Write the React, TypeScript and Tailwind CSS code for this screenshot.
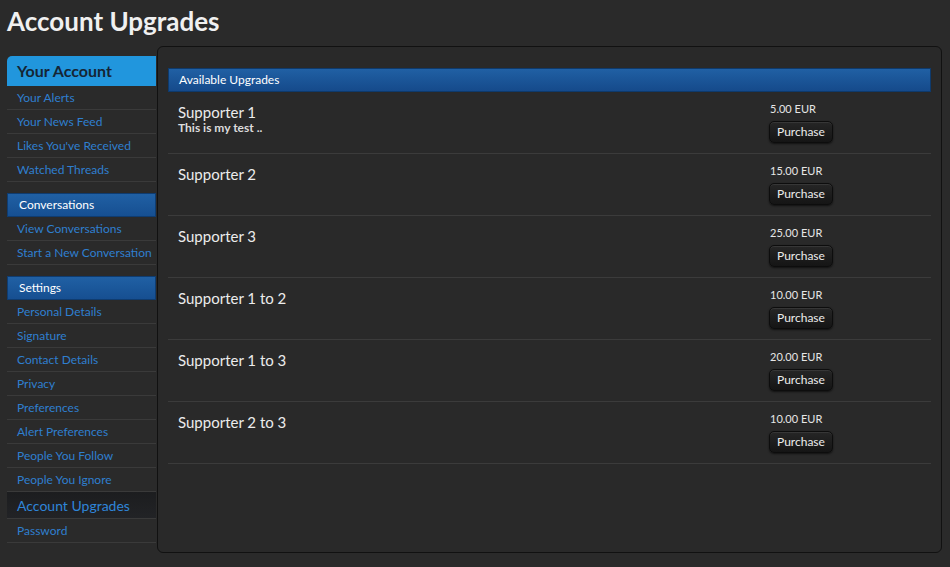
import React from 'react'

const accountLinks = ['Your Alerts', 'Your News Feed', "Likes You've Received", 'Watched Threads']
const convoLinks = ['View Conversations', 'Start a New Conversation']
const settingsLinks = [
  'Personal Details',
  'Signature',
  'Contact Details',
  'Privacy',
  'Preferences',
  'Alert Preferences',
  'People You Follow',
  'People You Ignore',
]

const upgrades = [
  { title: 'Supporter 1', desc: 'This is my test ..', price: '5.00 EUR' },
  { title: 'Supporter 2', price: '15.00 EUR' },
  { title: 'Supporter 3', price: '25.00 EUR' },
  { title: 'Supporter 1 to 2', price: '10.00 EUR' },
  { title: 'Supporter 1 to 3', price: '20.00 EUR' },
  { title: 'Supporter 2 to 3', price: '10.00 EUR' },
]

function NavLink({ label }: { label: string }) {
  return (
    <div className="h-6 pl-[10px] flex items-center border-b border-[#3a3a3a] text-[12px] text-[#2f7fcf] whitespace-nowrap">
      {label}
    </div>
  )
}

function SectionHead({ label }: { label: string }) {
  return (
    <div className="h-6 pl-[11px] flex items-center bg-gradient-to-b from-[#2060a4] to-[#164f91] border border-[#0f3c70] text-[12px] text-white">
      {label}
    </div>
  )
}

function UpgradeRow({ title, desc, price }: { title: string; desc?: string; price: string }) {
  return (
    <div className="h-[62px] flex border-b border-[#3b3b3b]">
      <div className="flex-1 pl-[10px] pt-[12px]">
        <div className="text-[15px] leading-[17px] text-[#ececec]">{title}</div>
        {desc && <div className="text-[12px] leading-[14px] font-bold text-[#dcdcdc]">{desc}</div>}
      </div>
      <div className="w-[162px] pt-[10px]">
        <div className="text-[11px] leading-[13px] text-[#e6e6e6] pl-[1px]">{price}</div>
        <button className="mt-[6px] h-[22px] px-[7px] rounded-[5px] bg-gradient-to-b from-[#262626] to-[#151515] border border-[#0d0d0d] shadow-[inset_0_1px_0_rgba(255,255,255,0.08),0_1px_2px_rgba(0,0,0,0.6)] text-[12px] text-[#ececec]">
          Purchase
        </button>
      </div>
    </div>
  )
}

export default function App() {
  return (
    <div className="w-[950px] h-[567px] bg-[#2a2a2a] font-['Lato',sans-serif] overflow-hidden">
      <h1 className="pl-[7px] pt-[5px] h-[46px] text-[26px] leading-[32px] font-bold text-[#f0f0f0]">
        Account Upgrades
      </h1>
      <div className="flex pl-[7px]">
        <div className="w-[149px] pt-[10px]">
          <div className="h-[30px] pl-[10px] flex items-center rounded-tl-[5px] bg-[#2196dd] text-[16px] font-bold text-[#152535]">
            Your Account
          </div>
          {accountLinks.map((l) => (
            <NavLink key={l} label={l} />
          ))}
          <div className="h-[11px]" />
          <SectionHead label="Conversations" />
          {convoLinks.map((l) => (
            <NavLink key={l} label={l} />
          ))}
          <div className="h-[11px]" />
          <SectionHead label="Settings" />
          {settingsLinks.map((l) => (
            <NavLink key={l} label={l} />
          ))}
          <div className="h-[27px] pl-[10px] flex items-center border-b border-[#3a3a3a] bg-gradient-to-b from-[#1c1d1f] to-[#222326] text-[14px] text-[#2f85d8]">
            Account Upgrades
          </div>
          <NavLink label="Password" />
        </div>
        <div className="w-[785px] h-[507px] ml-[1px] rounded-[6px] border border-[#111] bg-[#292929] px-[10px] pt-[21px]">
          <div className="h-[24px] pl-[10px] flex items-center bg-gradient-to-b from-[#2060a4] to-[#154a8b] border border-[#0e3a6c] text-[12px] text-white">
            Available Upgrades
          </div>
          {upgrades.map((u) => (
            <UpgradeRow key={u.title} {...u} />
          ))}
        </div>
      </div>
    </div>
  )
}
